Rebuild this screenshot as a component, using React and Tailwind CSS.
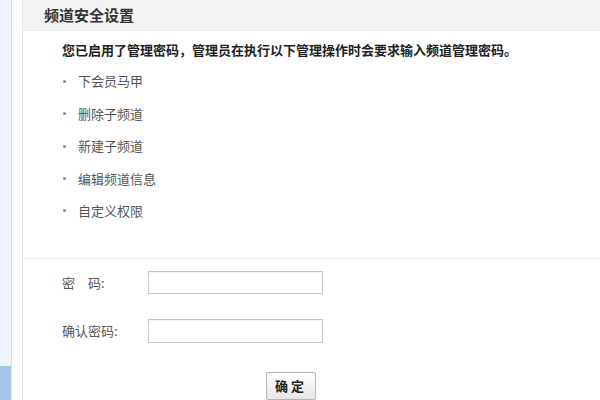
import React from "react";

const ops = ["下会员马甲", "删除子频道", "新建子频道", "编辑频道信息", "自定义权限"];

const App = () => {
  return (
    <div
      className="flex h-[400px] w-[600px] overflow-hidden bg-white"
      style={{ fontFamily: '"Noto Sans CJK SC", "Liberation Sans", sans-serif' }}
    >
      {/* side nav strip */}
      <div className="flex w-[12px] shrink-0 flex-col justify-end border-r border-[#d6e3ef] bg-[#eef5fc]">
        <div className="h-[34px] bg-[#a3c6e8]"></div>
      </div>

      <div className="flex flex-1 pl-[10px]">
        <div className="flex flex-1 flex-col border-l border-[#e6e6e6]">
          <div className="flex h-[32px] items-center border-b border-[#ececec] bg-[#f3f3f3] pl-[21px]">
            <h2 className="text-[15px] font-bold text-[#333]">频道安全设置</h2>
          </div>

          <div className="pl-[39px] pt-[9px] pb-[31px]">
            <p className="text-[13px] leading-[20px] font-bold text-[#222]">
              您已启用了管理密码，管理员在执行以下管理操作时会要求输入频道管理密码。
            </p>
            <ul className="mt-[5px]">
              {ops.map(op => (
                <li key={op} className="flex h-[32.4px] items-center text-[13px] text-[#555]">
                  <span className="ml-[1px] mr-[12px] h-[3px] w-[3px] rounded-full bg-[#888]"></span>
                  {op}
                </li>
              ))}
            </ul>
          </div>

          <div className="border-t border-[#ececec] pl-[39px] pt-[12px]">
            <div className="flex items-center">
              <label className="w-[86px] text-[13px] text-[#555]">
                密<span className="inline-block w-[13px]"></span>码:
              </label>
              <input
                type="password"
                className="h-[23px] w-[175px] border border-[#c6c6c6] bg-white shadow-[inset_0_1px_1px_rgba(0,0,0,0.06)]"
              />
            </div>
            <div className="mt-[25px] flex items-center">
              <label className="w-[86px] text-[13px] text-[#555]">确认密码:</label>
              <input
                type="password"
                className="h-[24px] w-[175px] border border-[#c6c6c6] bg-white shadow-[inset_0_1px_1px_rgba(0,0,0,0.06)]"
              />
            </div>
            <div className="mt-[29px] flex pl-[204px]">
              <button
                type="button"
                className="h-[28px] w-[50px] rounded-[2px] border border-[#b5b5b5] bg-gradient-to-b from-white to-[#e6e6e6] text-[13px] font-bold tracking-[3px] text-[#222]"
              >
                确定
              </button>
            </div>
          </div>
        </div>
      </div>
    </div>
  );
};

export default App;
